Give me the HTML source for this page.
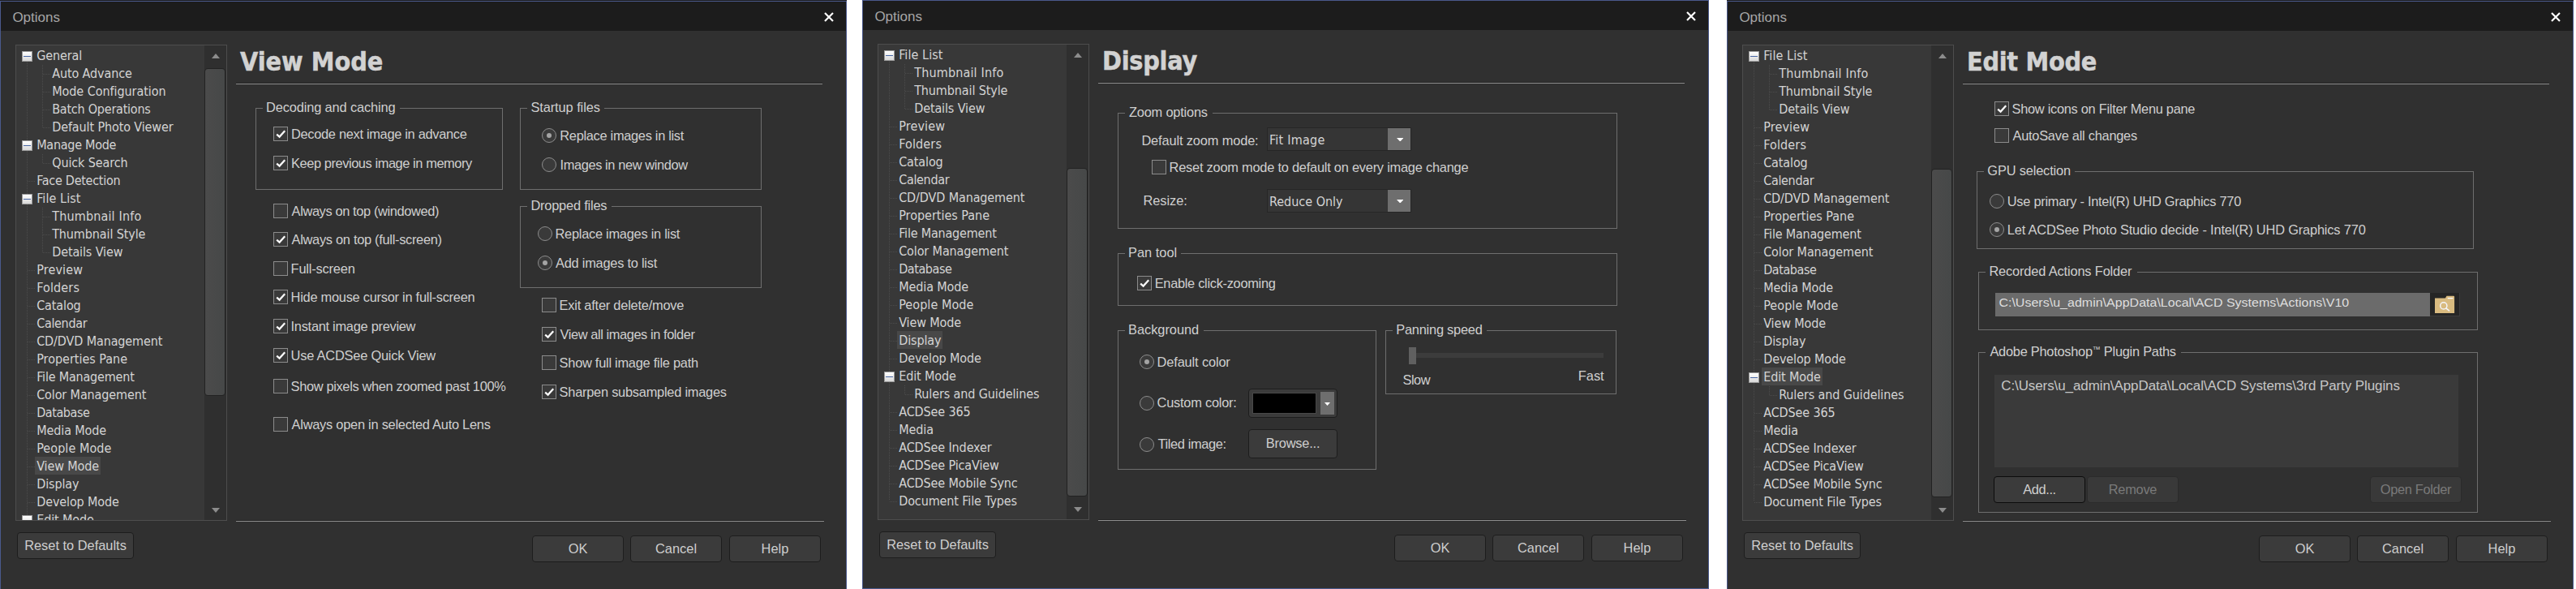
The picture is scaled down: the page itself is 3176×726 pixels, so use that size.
<!DOCTYPE html>
<html lang="en"><head><meta charset="utf-8"><title>Options</title>
<style>
html,body{margin:0;padding:0;}
body{width:3176px;height:726px;background:#fff;overflow:hidden;position:relative;font-family:"Liberation Sans",Arial,sans-serif;}
.dlg{position:absolute;width:1044px;height:727px;background:#303030;overflow:hidden;box-sizing:border-box;}
.dlg .bd{position:absolute;left:0;top:1px;width:1044px;height:726px;box-sizing:border-box;border:1px solid #4a598c;pointer-events:none;}
.r0{position:absolute;left:0;top:0;width:1044px;height:1px;background:#1c1b19;}
.tb{position:absolute;left:1px;top:2px;width:1042px;height:36px;background:#1c1c1c;}
.tt{position:absolute;left:15.4px;top:10.3px;font:17px/24px "Liberation Sans",Arial,sans-serif;color:#a6a6a6;white-space:pre;}
.a{position:absolute;white-space:pre;}
.t{position:absolute;white-space:pre;font:16.4px/20px "Liberation Sans",Arial,sans-serif;color:#cfcfcf;}
.tr{position:absolute;white-space:pre;font:16px/22px "DejaVu Sans Condensed","DejaVu Sans","Liberation Sans",sans-serif;letter-spacing:-0.12px;color:#d4d4d4;height:22px;}
.h{position:absolute;white-space:pre;font:bold 32px/40px "DejaVu Sans Condensed","DejaVu Sans","Liberation Sans",sans-serif;color:#d2d2d2;-webkit-text-stroke:0.5px #d2d2d2;}
.tree{position:absolute;left:19px;top:55px;width:261px;height:587px;box-sizing:border-box;border:1px solid #4d4d4d;background:#383838;overflow:hidden;}
.sb{position:absolute;left:232px;top:0;width:27px;height:585px;background:#2f2f2f;}
.th{position:absolute;left:232px;width:26px;box-sizing:border-box;background:linear-gradient(90deg,#4b4b4b,#464848);border:1px solid #222;border-radius:4px;}
.hr{position:absolute;height:1px;background:#8e8e8e;box-shadow:0 -1px 0 #222;}
.btn{position:absolute;box-sizing:border-box;border:1px solid #1d1d1d;border-radius:4px;background:#3b3b3b;color:#cecece;font:16.4px/20px "Liberation Sans",Arial,sans-serif;text-align:center;white-space:pre;}
.btn.dis{color:#7a7a7a;border-color:#2b2b2b;background:#393939;}
.btn.def{border-color:#0c0c0c;}
.cb{position:absolute;width:18px;height:18px;box-sizing:border-box;border:1px solid #8c8c8c;background:#3a3a3a;}
.rb{position:absolute;width:18px;height:18px;box-sizing:border-box;border:1px solid #8c8c8c;background:#3a3a3a;border-radius:50%;}
.rb.on::after{content:"";position:absolute;left:5px;top:5px;width:6px;height:6px;border-radius:50%;background:#a4a4a4;}
.gb{position:absolute;box-sizing:border-box;border:1px solid #6e6e6e;}
.gl{position:absolute;white-space:pre;font:16.4px/20px "Liberation Sans",Arial,sans-serif;color:#d4d4d4;background:#303030;}
.dd{position:absolute;box-sizing:border-box;border:1px solid #262626;background:#353535;}
.dd .ar{position:absolute;right:0;top:0;bottom:0;width:28px;background:#6e6e6e;}
.xb{position:absolute;width:13px;height:13px;box-sizing:border-box;border:1px solid #9a9a9a;background:linear-gradient(#ffffff,#d8d8d8);}
.xb::after{content:"";position:absolute;left:1px;top:5px;width:9px;height:1px;background:#4a68a6;}
.sm{font-size:10px;position:relative;top:-4.5px;}
</style></head>
<body>
<div class="dlg" style="left:0px;top:0px">
<div class="tb"></div><div class="tt">Options</div>
<svg class="a" style="left:1014.8px;top:13.9px" width="14" height="14" viewBox="0 0 14 14"><path d="M2 2 L12 12 M12 2 L2 12" stroke="#fff" stroke-width="2.2" fill="none"/></svg>
<div class="h" style="left:296px;top:56px;letter-spacing:0px">View Mode</div>
<div class="hr" style="left:291px;top:103px;width:723px"></div>
<div class="hr" style="left:291px;top:642px;width:725px"></div>
<div class="btn " style="left:21px;top:656px;width:144px;height:33px;line-height:30.5px;letter-spacing:0.000px;padding-left:0.000px;">Reset to Defaults</div>
<div class="btn " style="left:656px;top:660px;width:113px;height:33px;line-height:30.5px;letter-spacing:0.000px;padding-left:0.000px;">OK</div>
<div class="btn " style="left:777px;top:660px;width:113px;height:33px;line-height:30.5px;letter-spacing:0.020px;padding-left:0.020px;">Cancel</div>
<div class="btn " style="left:899px;top:660px;width:113px;height:33px;line-height:30.5px;letter-spacing:0.033px;padding-left:0.033px;">Help</div>
<div class="tree">
<div class="a" style="left:13px;top:12px;width:1px;height:594px;background-image:linear-gradient(#4c4c4c 50%,transparent 50%);background-size:1px 2px;"></div>
<div class="xb" style="left:7px;top:7px"></div>
<div class="tr" style="left:23.200000000000003px;top:1px;padding:0 2px;line-height:24px;">General</div>
<div class="a" style="left:33px;top:35px;width:9px;height:1px;background-image:linear-gradient(90deg,#4c4c4c 50%,transparent 50%);background-size:2px 1px;"></div>
<div class="a" style="left:32px;top:24px;width:1px;height:22px;background-image:linear-gradient(#4c4c4c 50%,transparent 50%);background-size:1px 2px;"></div>
<div class="tr" style="left:42.2px;top:23px;padding:0 2px;line-height:24px;">Auto Advance</div>
<div class="a" style="left:33px;top:57px;width:9px;height:1px;background-image:linear-gradient(90deg,#4c4c4c 50%,transparent 50%);background-size:2px 1px;"></div>
<div class="a" style="left:32px;top:46px;width:1px;height:22px;background-image:linear-gradient(#4c4c4c 50%,transparent 50%);background-size:1px 2px;"></div>
<div class="tr" style="left:42.2px;top:45px;padding:0 2px;line-height:24px;letter-spacing:-0.06px;">Mode Configuration</div>
<div class="a" style="left:33px;top:79px;width:9px;height:1px;background-image:linear-gradient(90deg,#4c4c4c 50%,transparent 50%);background-size:2px 1px;"></div>
<div class="a" style="left:32px;top:68px;width:1px;height:22px;background-image:linear-gradient(#4c4c4c 50%,transparent 50%);background-size:1px 2px;"></div>
<div class="tr" style="left:42.2px;top:67px;padding:0 2px;line-height:24px;letter-spacing:-0.23px;">Batch Operations</div>
<div class="a" style="left:33px;top:101px;width:9px;height:1px;background-image:linear-gradient(90deg,#4c4c4c 50%,transparent 50%);background-size:2px 1px;"></div>
<div class="a" style="left:32px;top:90px;width:1px;height:12px;background-image:linear-gradient(#4c4c4c 50%,transparent 50%);background-size:1px 2px;"></div>
<div class="tr" style="left:42.2px;top:89px;padding:0 2px;line-height:24px;">Default Photo Viewer</div>
<div class="xb" style="left:7px;top:117px"></div>
<div class="tr" style="left:23.200000000000003px;top:111px;padding:0 2px;line-height:24px;letter-spacing:-0.27px;">Manage Mode</div>
<div class="a" style="left:33px;top:145px;width:9px;height:1px;background-image:linear-gradient(90deg,#4c4c4c 50%,transparent 50%);background-size:2px 1px;"></div>
<div class="a" style="left:32px;top:134px;width:1px;height:12px;background-image:linear-gradient(#4c4c4c 50%,transparent 50%);background-size:1px 2px;"></div>
<div class="tr" style="left:42.2px;top:133px;padding:0 2px;line-height:24px;">Quick Search</div>
<div class="a" style="left:14px;top:167px;width:9px;height:1px;background-image:linear-gradient(90deg,#4c4c4c 50%,transparent 50%);background-size:2px 1px;"></div>
<div class="tr" style="left:23.200000000000003px;top:155px;padding:0 2px;line-height:24px;letter-spacing:-0.27px;">Face Detection</div>
<div class="xb" style="left:7px;top:183px"></div>
<div class="tr" style="left:23.200000000000003px;top:177px;padding:0 2px;line-height:24px;letter-spacing:0.07px;">File List</div>
<div class="a" style="left:33px;top:211px;width:9px;height:1px;background-image:linear-gradient(90deg,#4c4c4c 50%,transparent 50%);background-size:2px 1px;"></div>
<div class="a" style="left:32px;top:200px;width:1px;height:22px;background-image:linear-gradient(#4c4c4c 50%,transparent 50%);background-size:1px 2px;"></div>
<div class="tr" style="left:42.2px;top:199px;padding:0 2px;line-height:24px;letter-spacing:0.16px;">Thumbnail Info</div>
<div class="a" style="left:33px;top:233px;width:9px;height:1px;background-image:linear-gradient(90deg,#4c4c4c 50%,transparent 50%);background-size:2px 1px;"></div>
<div class="a" style="left:32px;top:222px;width:1px;height:22px;background-image:linear-gradient(#4c4c4c 50%,transparent 50%);background-size:1px 2px;"></div>
<div class="tr" style="left:42.2px;top:221px;padding:0 2px;line-height:24px;">Thumbnail Style</div>
<div class="a" style="left:33px;top:255px;width:9px;height:1px;background-image:linear-gradient(90deg,#4c4c4c 50%,transparent 50%);background-size:2px 1px;"></div>
<div class="a" style="left:32px;top:244px;width:1px;height:12px;background-image:linear-gradient(#4c4c4c 50%,transparent 50%);background-size:1px 2px;"></div>
<div class="tr" style="left:42.2px;top:243px;padding:0 2px;line-height:24px;">Details View</div>
<div class="a" style="left:14px;top:277px;width:9px;height:1px;background-image:linear-gradient(90deg,#4c4c4c 50%,transparent 50%);background-size:2px 1px;"></div>
<div class="tr" style="left:23.200000000000003px;top:265px;padding:0 2px;line-height:24px;letter-spacing:0.15px;">Preview</div>
<div class="a" style="left:14px;top:299px;width:9px;height:1px;background-image:linear-gradient(90deg,#4c4c4c 50%,transparent 50%);background-size:2px 1px;"></div>
<div class="tr" style="left:23.200000000000003px;top:287px;padding:0 2px;line-height:24px;letter-spacing:0.13px;">Folders</div>
<div class="a" style="left:14px;top:321px;width:9px;height:1px;background-image:linear-gradient(90deg,#4c4c4c 50%,transparent 50%);background-size:2px 1px;"></div>
<div class="tr" style="left:23.200000000000003px;top:309px;padding:0 2px;line-height:24px;">Catalog</div>
<div class="a" style="left:14px;top:343px;width:9px;height:1px;background-image:linear-gradient(90deg,#4c4c4c 50%,transparent 50%);background-size:2px 1px;"></div>
<div class="tr" style="left:23.200000000000003px;top:331px;padding:0 2px;line-height:24px;letter-spacing:-0.33px;">Calendar</div>
<div class="a" style="left:14px;top:365px;width:9px;height:1px;background-image:linear-gradient(90deg,#4c4c4c 50%,transparent 50%);background-size:2px 1px;"></div>
<div class="tr" style="left:23.200000000000003px;top:353px;padding:0 2px;line-height:24px;">CD/DVD Management</div>
<div class="a" style="left:14px;top:387px;width:9px;height:1px;background-image:linear-gradient(90deg,#4c4c4c 50%,transparent 50%);background-size:2px 1px;"></div>
<div class="tr" style="left:23.200000000000003px;top:375px;padding:0 2px;line-height:24px;letter-spacing:-0.01px;">Properties Pane</div>
<div class="a" style="left:14px;top:409px;width:9px;height:1px;background-image:linear-gradient(90deg,#4c4c4c 50%,transparent 50%);background-size:2px 1px;"></div>
<div class="tr" style="left:23.200000000000003px;top:397px;padding:0 2px;line-height:24px;letter-spacing:-0.2px;">File Management</div>
<div class="a" style="left:14px;top:431px;width:9px;height:1px;background-image:linear-gradient(90deg,#4c4c4c 50%,transparent 50%);background-size:2px 1px;"></div>
<div class="tr" style="left:23.200000000000003px;top:419px;padding:0 2px;line-height:24px;">Color Management</div>
<div class="a" style="left:14px;top:453px;width:9px;height:1px;background-image:linear-gradient(90deg,#4c4c4c 50%,transparent 50%);background-size:2px 1px;"></div>
<div class="tr" style="left:23.200000000000003px;top:441px;padding:0 2px;line-height:24px;letter-spacing:-0.42px;">Database</div>
<div class="a" style="left:14px;top:475px;width:9px;height:1px;background-image:linear-gradient(90deg,#4c4c4c 50%,transparent 50%);background-size:2px 1px;"></div>
<div class="tr" style="left:23.200000000000003px;top:463px;padding:0 2px;line-height:24px;">Media Mode</div>
<div class="a" style="left:14px;top:497px;width:9px;height:1px;background-image:linear-gradient(90deg,#4c4c4c 50%,transparent 50%);background-size:2px 1px;"></div>
<div class="tr" style="left:23.200000000000003px;top:485px;padding:0 2px;line-height:24px;letter-spacing:0.06px;">People Mode</div>
<div class="a" style="left:14px;top:519px;width:9px;height:1px;background-image:linear-gradient(90deg,#4c4c4c 50%,transparent 50%);background-size:2px 1px;"></div>
<div class="tr" style="left:23.200000000000003px;top:507px;padding:0 2px;line-height:24px;background:#484848;">View Mode</div>
<div class="a" style="left:14px;top:541px;width:9px;height:1px;background-image:linear-gradient(90deg,#4c4c4c 50%,transparent 50%);background-size:2px 1px;"></div>
<div class="tr" style="left:23.200000000000003px;top:529px;padding:0 2px;line-height:24px;">Display</div>
<div class="a" style="left:14px;top:563px;width:9px;height:1px;background-image:linear-gradient(90deg,#4c4c4c 50%,transparent 50%);background-size:2px 1px;"></div>
<div class="tr" style="left:23.200000000000003px;top:551px;padding:0 2px;line-height:24px;">Develop Mode</div>
<div class="xb" style="left:7px;top:579px"></div>
<div class="tr" style="left:23.200000000000003px;top:573px;padding:0 2px;line-height:24px;">Edit Mode</div>
<div class="a" style="left:33px;top:607px;width:9px;height:1px;background-image:linear-gradient(90deg,#4c4c4c 50%,transparent 50%);background-size:2px 1px;"></div>
<div class="a" style="left:32px;top:596px;width:1px;height:12px;background-image:linear-gradient(#4c4c4c 50%,transparent 50%);background-size:1px 2px;"></div>
<div class="tr" style="left:42.2px;top:595px;padding:0 2px;line-height:24px;">Rulers and Guidelines</div>
<div class="sb"></div>
<div class="th" style="top:28px;height:404px"></div>
<svg class="a" style="left:240.5px;top:10px" width="10" height="6" viewBox="0 0 10 6"><path d="M0 6 L5 0 L10 6 Z" fill="#8c8c8c"/></svg>
<svg class="a" style="left:240.5px;top:570.0px" width="10" height="6" viewBox="0 0 10 6"><path d="M0 0 L10 0 L5.0 6 Z" fill="#8c8c8c"/></svg>
</div>
<div class="gb" style="left:315px;top:133px;width:305px;height:101px"></div>
<div class="a" style="left:324.0px;top:131px;width:168.5px;height:5px;background:#303030"></div>
<div class="t" style="left:328.00px;top:121.75px;letter-spacing:-0.132px;">Decoding and caching</div>
<div class="cb" style="left:337px;top:156px"><svg class="a" style="left:0;top:0" width="16" height="16" viewBox="0 0 16 16"><path d="M3.2 8.6 L6.6 11.6 L13.2 4.2" fill="none" stroke="#fff" stroke-width="2.2"/></svg></div>
<div class="t" style="left:359.00px;top:154.75px;letter-spacing:-0.307px;">Decode next image in advance</div>
<div class="cb" style="left:337px;top:192px"><svg class="a" style="left:0;top:0" width="16" height="16" viewBox="0 0 16 16"><path d="M3.2 8.6 L6.6 11.6 L13.2 4.2" fill="none" stroke="#fff" stroke-width="2.2"/></svg></div>
<div class="t" style="left:359.00px;top:190.75px;letter-spacing:-0.421px;">Keep previous image in memory</div>
<div class="cb" style="left:337px;top:251px"></div>
<div class="t" style="left:359.60px;top:249.75px;letter-spacing:-0.374px;">Always on top (windowed)</div>
<div class="cb" style="left:337px;top:286px"><svg class="a" style="left:0;top:0" width="16" height="16" viewBox="0 0 16 16"><path d="M3.2 8.6 L6.6 11.6 L13.2 4.2" fill="none" stroke="#fff" stroke-width="2.2"/></svg></div>
<div class="t" style="left:359.60px;top:284.75px;letter-spacing:-0.296px;">Always on top (full-screen)</div>
<div class="cb" style="left:337px;top:322px"></div>
<div class="t" style="left:358.60px;top:320.75px;letter-spacing:-0.180px;">Full-screen</div>
<div class="cb" style="left:337px;top:357px"><svg class="a" style="left:0;top:0" width="16" height="16" viewBox="0 0 16 16"><path d="M3.2 8.6 L6.6 11.6 L13.2 4.2" fill="none" stroke="#fff" stroke-width="2.2"/></svg></div>
<div class="t" style="left:358.60px;top:355.75px;letter-spacing:-0.258px;">Hide mouse cursor in full-screen</div>
<div class="cb" style="left:337px;top:393px"><svg class="a" style="left:0;top:0" width="16" height="16" viewBox="0 0 16 16"><path d="M3.2 8.6 L6.6 11.6 L13.2 4.2" fill="none" stroke="#fff" stroke-width="2.2"/></svg></div>
<div class="t" style="left:358.60px;top:391.75px;letter-spacing:-0.280px;">Instant image preview</div>
<div class="cb" style="left:337px;top:429px"><svg class="a" style="left:0;top:0" width="16" height="16" viewBox="0 0 16 16"><path d="M3.2 8.6 L6.6 11.6 L13.2 4.2" fill="none" stroke="#fff" stroke-width="2.2"/></svg></div>
<div class="t" style="left:358.60px;top:427.75px;letter-spacing:-0.210px;">Use ACDSee Quick View</div>
<div class="cb" style="left:337px;top:467px"></div>
<div class="t" style="left:358.60px;top:465.75px;letter-spacing:-0.341px;">Show pixels when zoomed past 100%</div>
<div class="cb" style="left:337px;top:514px"></div>
<div class="t" style="left:359.60px;top:512.75px;letter-spacing:-0.250px;">Always open in selected Auto Lens</div>
<div class="gb" style="left:641px;top:133px;width:298px;height:101px"></div>
<div class="a" style="left:650.4px;top:131px;width:95.0px;height:5px;background:#303030"></div>
<div class="t" style="left:654.40px;top:121.75px;letter-spacing:-0.083px;">Startup files</div>
<div class="rb on" style="left:668px;top:158px"></div>
<div class="t" style="left:690.30px;top:156.75px;letter-spacing:-0.305px;">Replace images in list</div>
<div class="rb" style="left:668px;top:194px"></div>
<div class="t" style="left:690.50px;top:192.75px;letter-spacing:-0.384px;">Images in new window</div>
<div class="gb" style="left:641px;top:254px;width:298px;height:101px"></div>
<div class="a" style="left:650.4px;top:252px;width:103.6px;height:5px;background:#303030"></div>
<div class="t" style="left:654.40px;top:242.75px;letter-spacing:-0.200px;">Dropped files</div>
<div class="rb" style="left:663px;top:279px"></div>
<div class="t" style="left:684.50px;top:277.75px;letter-spacing:-0.262px;">Replace images in list</div>
<div class="rb on" style="left:663px;top:315px"></div>
<div class="t" style="left:685.00px;top:313.75px;letter-spacing:-0.241px;">Add images to list</div>
<div class="cb" style="left:668px;top:367px"></div>
<div class="t" style="left:689.60px;top:365.75px;letter-spacing:-0.224px;">Exit after delete/move</div>
<div class="cb" style="left:668px;top:403px"><svg class="a" style="left:0;top:0" width="16" height="16" viewBox="0 0 16 16"><path d="M3.2 8.6 L6.6 11.6 L13.2 4.2" fill="none" stroke="#fff" stroke-width="2.2"/></svg></div>
<div class="t" style="left:690.60px;top:401.75px;letter-spacing:-0.421px;">View all images in folder</div>
<div class="cb" style="left:668px;top:438px"></div>
<div class="t" style="left:689.60px;top:436.75px;letter-spacing:-0.258px;">Show full image file path</div>
<div class="cb" style="left:668px;top:474px"><svg class="a" style="left:0;top:0" width="16" height="16" viewBox="0 0 16 16"><path d="M3.2 8.6 L6.6 11.6 L13.2 4.2" fill="none" stroke="#fff" stroke-width="2.2"/></svg></div>
<div class="t" style="left:689.60px;top:472.75px;letter-spacing:-0.246px;">Sharpen subsampled images</div>
<div class="bd"></div><div class="r0"></div>
</div>
<div class="dlg" style="left:1063px;top:-1px">
<div class="tb"></div><div class="tt">Options</div>
<svg class="a" style="left:1014.8px;top:13.9px" width="14" height="14" viewBox="0 0 14 14"><path d="M2 2 L12 12 M12 2 L2 12" stroke="#fff" stroke-width="2.2" fill="none"/></svg>
<div class="h" style="left:296px;top:56px;letter-spacing:-0.23px">Display</div>
<div class="hr" style="left:291px;top:103px;width:723px"></div>
<div class="hr" style="left:291px;top:642px;width:725px"></div>
<div class="btn " style="left:21px;top:656px;width:144px;height:33px;line-height:30.5px;letter-spacing:0.000px;padding-left:0.000px;">Reset to Defaults</div>
<div class="btn " style="left:656px;top:660px;width:113px;height:33px;line-height:30.5px;letter-spacing:0.000px;padding-left:0.000px;">OK</div>
<div class="btn " style="left:777px;top:660px;width:113px;height:33px;line-height:30.5px;letter-spacing:0.020px;padding-left:0.020px;">Cancel</div>
<div class="btn " style="left:899px;top:660px;width:113px;height:33px;line-height:30.5px;letter-spacing:0.033px;padding-left:0.033px;">Help</div>
<div class="tree">
<div class="a" style="left:13px;top:12px;width:1px;height:550px;background-image:linear-gradient(#4c4c4c 50%,transparent 50%);background-size:1px 2px;"></div>
<div class="xb" style="left:7px;top:7px"></div>
<div class="tr" style="left:23.200000000000003px;top:1px;padding:0 2px;line-height:24px;letter-spacing:0.07px;">File List</div>
<div class="a" style="left:33px;top:35px;width:9px;height:1px;background-image:linear-gradient(90deg,#4c4c4c 50%,transparent 50%);background-size:2px 1px;"></div>
<div class="a" style="left:32px;top:24px;width:1px;height:22px;background-image:linear-gradient(#4c4c4c 50%,transparent 50%);background-size:1px 2px;"></div>
<div class="tr" style="left:42.2px;top:23px;padding:0 2px;line-height:24px;letter-spacing:0.16px;">Thumbnail Info</div>
<div class="a" style="left:33px;top:57px;width:9px;height:1px;background-image:linear-gradient(90deg,#4c4c4c 50%,transparent 50%);background-size:2px 1px;"></div>
<div class="a" style="left:32px;top:46px;width:1px;height:22px;background-image:linear-gradient(#4c4c4c 50%,transparent 50%);background-size:1px 2px;"></div>
<div class="tr" style="left:42.2px;top:45px;padding:0 2px;line-height:24px;">Thumbnail Style</div>
<div class="a" style="left:33px;top:79px;width:9px;height:1px;background-image:linear-gradient(90deg,#4c4c4c 50%,transparent 50%);background-size:2px 1px;"></div>
<div class="a" style="left:32px;top:68px;width:1px;height:12px;background-image:linear-gradient(#4c4c4c 50%,transparent 50%);background-size:1px 2px;"></div>
<div class="tr" style="left:42.2px;top:67px;padding:0 2px;line-height:24px;">Details View</div>
<div class="a" style="left:14px;top:101px;width:9px;height:1px;background-image:linear-gradient(90deg,#4c4c4c 50%,transparent 50%);background-size:2px 1px;"></div>
<div class="tr" style="left:23.200000000000003px;top:89px;padding:0 2px;line-height:24px;letter-spacing:0.15px;">Preview</div>
<div class="a" style="left:14px;top:123px;width:9px;height:1px;background-image:linear-gradient(90deg,#4c4c4c 50%,transparent 50%);background-size:2px 1px;"></div>
<div class="tr" style="left:23.200000000000003px;top:111px;padding:0 2px;line-height:24px;letter-spacing:0.13px;">Folders</div>
<div class="a" style="left:14px;top:145px;width:9px;height:1px;background-image:linear-gradient(90deg,#4c4c4c 50%,transparent 50%);background-size:2px 1px;"></div>
<div class="tr" style="left:23.200000000000003px;top:133px;padding:0 2px;line-height:24px;">Catalog</div>
<div class="a" style="left:14px;top:167px;width:9px;height:1px;background-image:linear-gradient(90deg,#4c4c4c 50%,transparent 50%);background-size:2px 1px;"></div>
<div class="tr" style="left:23.200000000000003px;top:155px;padding:0 2px;line-height:24px;letter-spacing:-0.33px;">Calendar</div>
<div class="a" style="left:14px;top:189px;width:9px;height:1px;background-image:linear-gradient(90deg,#4c4c4c 50%,transparent 50%);background-size:2px 1px;"></div>
<div class="tr" style="left:23.200000000000003px;top:177px;padding:0 2px;line-height:24px;">CD/DVD Management</div>
<div class="a" style="left:14px;top:211px;width:9px;height:1px;background-image:linear-gradient(90deg,#4c4c4c 50%,transparent 50%);background-size:2px 1px;"></div>
<div class="tr" style="left:23.200000000000003px;top:199px;padding:0 2px;line-height:24px;letter-spacing:-0.01px;">Properties Pane</div>
<div class="a" style="left:14px;top:233px;width:9px;height:1px;background-image:linear-gradient(90deg,#4c4c4c 50%,transparent 50%);background-size:2px 1px;"></div>
<div class="tr" style="left:23.200000000000003px;top:221px;padding:0 2px;line-height:24px;letter-spacing:-0.2px;">File Management</div>
<div class="a" style="left:14px;top:255px;width:9px;height:1px;background-image:linear-gradient(90deg,#4c4c4c 50%,transparent 50%);background-size:2px 1px;"></div>
<div class="tr" style="left:23.200000000000003px;top:243px;padding:0 2px;line-height:24px;">Color Management</div>
<div class="a" style="left:14px;top:277px;width:9px;height:1px;background-image:linear-gradient(90deg,#4c4c4c 50%,transparent 50%);background-size:2px 1px;"></div>
<div class="tr" style="left:23.200000000000003px;top:265px;padding:0 2px;line-height:24px;letter-spacing:-0.42px;">Database</div>
<div class="a" style="left:14px;top:299px;width:9px;height:1px;background-image:linear-gradient(90deg,#4c4c4c 50%,transparent 50%);background-size:2px 1px;"></div>
<div class="tr" style="left:23.200000000000003px;top:287px;padding:0 2px;line-height:24px;">Media Mode</div>
<div class="a" style="left:14px;top:321px;width:9px;height:1px;background-image:linear-gradient(90deg,#4c4c4c 50%,transparent 50%);background-size:2px 1px;"></div>
<div class="tr" style="left:23.200000000000003px;top:309px;padding:0 2px;line-height:24px;letter-spacing:0.06px;">People Mode</div>
<div class="a" style="left:14px;top:343px;width:9px;height:1px;background-image:linear-gradient(90deg,#4c4c4c 50%,transparent 50%);background-size:2px 1px;"></div>
<div class="tr" style="left:23.200000000000003px;top:331px;padding:0 2px;line-height:24px;">View Mode</div>
<div class="a" style="left:14px;top:365px;width:9px;height:1px;background-image:linear-gradient(90deg,#4c4c4c 50%,transparent 50%);background-size:2px 1px;"></div>
<div class="tr" style="left:23.200000000000003px;top:353px;padding:0 2px;line-height:24px;background:#484848;">Display</div>
<div class="a" style="left:14px;top:387px;width:9px;height:1px;background-image:linear-gradient(90deg,#4c4c4c 50%,transparent 50%);background-size:2px 1px;"></div>
<div class="tr" style="left:23.200000000000003px;top:375px;padding:0 2px;line-height:24px;">Develop Mode</div>
<div class="xb" style="left:7px;top:403px"></div>
<div class="tr" style="left:23.200000000000003px;top:397px;padding:0 2px;line-height:24px;">Edit Mode</div>
<div class="a" style="left:33px;top:431px;width:9px;height:1px;background-image:linear-gradient(90deg,#4c4c4c 50%,transparent 50%);background-size:2px 1px;"></div>
<div class="a" style="left:32px;top:420px;width:1px;height:12px;background-image:linear-gradient(#4c4c4c 50%,transparent 50%);background-size:1px 2px;"></div>
<div class="tr" style="left:42.2px;top:419px;padding:0 2px;line-height:24px;">Rulers and Guidelines</div>
<div class="a" style="left:14px;top:453px;width:9px;height:1px;background-image:linear-gradient(90deg,#4c4c4c 50%,transparent 50%);background-size:2px 1px;"></div>
<div class="tr" style="left:23.200000000000003px;top:441px;padding:0 2px;line-height:24px;">ACDSee 365</div>
<div class="a" style="left:14px;top:475px;width:9px;height:1px;background-image:linear-gradient(90deg,#4c4c4c 50%,transparent 50%);background-size:2px 1px;"></div>
<div class="tr" style="left:23.200000000000003px;top:463px;padding:0 2px;line-height:24px;">Media</div>
<div class="a" style="left:14px;top:497px;width:9px;height:1px;background-image:linear-gradient(90deg,#4c4c4c 50%,transparent 50%);background-size:2px 1px;"></div>
<div class="tr" style="left:23.200000000000003px;top:485px;padding:0 2px;line-height:24px;">ACDSee Indexer</div>
<div class="a" style="left:14px;top:519px;width:9px;height:1px;background-image:linear-gradient(90deg,#4c4c4c 50%,transparent 50%);background-size:2px 1px;"></div>
<div class="tr" style="left:23.200000000000003px;top:507px;padding:0 2px;line-height:24px;">ACDSee PicaView</div>
<div class="a" style="left:14px;top:541px;width:9px;height:1px;background-image:linear-gradient(90deg,#4c4c4c 50%,transparent 50%);background-size:2px 1px;"></div>
<div class="tr" style="left:23.200000000000003px;top:529px;padding:0 2px;line-height:24px;">ACDSee Mobile Sync</div>
<div class="a" style="left:14px;top:563px;width:9px;height:1px;background-image:linear-gradient(90deg,#4c4c4c 50%,transparent 50%);background-size:2px 1px;"></div>
<div class="tr" style="left:23.200000000000003px;top:551px;padding:0 2px;line-height:24px;">Document File Types</div>
<div class="sb"></div>
<div class="th" style="top:152px;height:405px"></div>
<svg class="a" style="left:240.5px;top:10px" width="10" height="6" viewBox="0 0 10 6"><path d="M0 6 L5 0 L10 6 Z" fill="#8c8c8c"/></svg>
<svg class="a" style="left:240.5px;top:570.0px" width="10" height="6" viewBox="0 0 10 6"><path d="M0 0 L10 0 L5.0 6 Z" fill="#8c8c8c"/></svg>
</div>
<div class="gb" style="left:315px;top:140px;width:616px;height:143px"></div>
<div class="a" style="left:324.0px;top:138px;width:107.7px;height:5px;background:#303030"></div>
<div class="t" style="left:329.00px;top:128.75px;letter-spacing:-0.209px;">Zoom options</div>
<div class="t" style="left:344.40px;top:163.75px;letter-spacing:-0.141px;">Default zoom mode:</div>
<div class="dd" style="left:499px;top:158px;width:178px;height:29px"><div class="ar"></div></div>
<svg class="a" style="left:658.75px;top:170.75px" width="8.5" height="4.5" viewBox="0 0 8.5 4.5"><path d="M0 0 L8.5 0 L4.25 4.5 Z" fill="#fff"/></svg>
<div class="tr" style="left:502.00px;top:163.16px;letter-spacing:0.238px;">Fit Image</div>
<div class="cb" style="left:357px;top:198px"></div>
<div class="t" style="left:378.60px;top:196.75px;letter-spacing:-0.234px;">Reset zoom mode to default on every image change</div>
<div class="t" style="left:346.50px;top:238.25px;letter-spacing:-0.050px;">Resize:</div>
<div class="dd" style="left:499px;top:234px;width:178px;height:29px"><div class="ar"></div></div>
<svg class="a" style="left:658.75px;top:246.75px" width="8.5" height="4.5" viewBox="0 0 8.5 4.5"><path d="M0 0 L8.5 0 L4.25 4.5 Z" fill="#fff"/></svg>
<div class="tr" style="left:502.00px;top:239.16px;letter-spacing:-0.010px;">Reduce Only</div>
<div class="gb" style="left:315px;top:313px;width:616px;height:65px"></div>
<div class="a" style="left:324.0px;top:311px;width:69.0px;height:5px;background:#303030"></div>
<div class="t" style="left:328.00px;top:301.75px;letter-spacing:0.000px;">Pan tool</div>
<div class="cb" style="left:339px;top:341px"><svg class="a" style="left:0;top:0" width="16" height="16" viewBox="0 0 16 16"><path d="M3.2 8.6 L6.6 11.6 L13.2 4.2" fill="none" stroke="#fff" stroke-width="2.2"/></svg></div>
<div class="t" style="left:360.70px;top:339.75px;letter-spacing:-0.300px;">Enable click-zooming</div>
<div class="gb" style="left:315px;top:408px;width:319px;height:172px"></div>
<div class="a" style="left:324.0px;top:406px;width:96.7px;height:5px;background:#303030"></div>
<div class="t" style="left:328.00px;top:396.75px;letter-spacing:-0.033px;">Background</div>
<div class="rb on" style="left:342px;top:438px"></div>
<div class="t" style="left:363.60px;top:436.75px;letter-spacing:-0.150px;">Default color</div>
<div class="rb" style="left:342px;top:488.5px"></div>
<div class="t" style="left:363.60px;top:487.25px;letter-spacing:-0.242px;">Custom color:</div>
<div class="rb" style="left:342px;top:539.5px"></div>
<div class="t" style="left:364.60px;top:538.25px;letter-spacing:-0.391px;">Tiled image:</div>
<div class="btn" style="left:476px;top:480px;width:110px;height:36px"></div>
<div class="a" style="left:481px;top:485px;width:79px;height:26px;background:#000;border:1px solid #484848;box-sizing:border-box"></div>
<div class="a" style="left:565px;top:484px;width:17px;height:28px;background:#6e6e6e"></div>
<svg class="a" style="left:570.0px;top:496.5px" width="7" height="4" viewBox="0 0 7 4"><path d="M0 0 L7 0 L3.5 4 Z" fill="#fff"/></svg>
<div class="btn " style="left:476px;top:530px;width:110px;height:36px;line-height:33.5px;letter-spacing:-0.200px;padding-left:-0.200px;">Browse...</div>
<div class="gb" style="left:645px;top:408px;width:285px;height:79px"></div>
<div class="a" style="left:654.3px;top:406px;width:116.1px;height:5px;background:#303030"></div>
<div class="t" style="left:658.30px;top:396.75px;letter-spacing:-0.242px;">Panning speed</div>
<div class="a" style="left:674px;top:436px;width:240px;height:6px;background:#3c3c3c"></div>
<div class="a" style="left:674px;top:428.5px;width:9px;height:21px;background:#606060"></div>
<div class="t" style="left:666.50px;top:458.75px;letter-spacing:-0.500px;">Slow</div>
<div class="t" style="left:882.70px;top:453.75px;letter-spacing:0.033px;">Fast</div>
<div class="bd"></div><div class="r0"></div>
</div>
<div class="dlg" style="left:2129px;top:0px">
<div class="tb"></div><div class="tt">Options</div>
<svg class="a" style="left:1014.8px;top:13.9px" width="14" height="14" viewBox="0 0 14 14"><path d="M2 2 L12 12 M12 2 L2 12" stroke="#fff" stroke-width="2.2" fill="none"/></svg>
<div class="h" style="left:296px;top:56px;letter-spacing:-0.27px">Edit Mode</div>
<div class="hr" style="left:291px;top:103px;width:723px"></div>
<div class="hr" style="left:291px;top:642px;width:725px"></div>
<div class="btn " style="left:21px;top:656px;width:144px;height:33px;line-height:30.5px;letter-spacing:0.000px;padding-left:0.000px;">Reset to Defaults</div>
<div class="btn " style="left:656px;top:660px;width:113px;height:33px;line-height:30.5px;letter-spacing:0.000px;padding-left:0.000px;">OK</div>
<div class="btn " style="left:777px;top:660px;width:113px;height:33px;line-height:30.5px;letter-spacing:0.020px;padding-left:0.020px;">Cancel</div>
<div class="btn " style="left:899px;top:660px;width:113px;height:33px;line-height:30.5px;letter-spacing:0.033px;padding-left:0.033px;">Help</div>
<div class="tree">
<div class="a" style="left:13px;top:12px;width:1px;height:550px;background-image:linear-gradient(#4c4c4c 50%,transparent 50%);background-size:1px 2px;"></div>
<div class="xb" style="left:7px;top:7px"></div>
<div class="tr" style="left:23.200000000000003px;top:1px;padding:0 2px;line-height:24px;letter-spacing:0.07px;">File List</div>
<div class="a" style="left:33px;top:35px;width:9px;height:1px;background-image:linear-gradient(90deg,#4c4c4c 50%,transparent 50%);background-size:2px 1px;"></div>
<div class="a" style="left:32px;top:24px;width:1px;height:22px;background-image:linear-gradient(#4c4c4c 50%,transparent 50%);background-size:1px 2px;"></div>
<div class="tr" style="left:42.2px;top:23px;padding:0 2px;line-height:24px;letter-spacing:0.16px;">Thumbnail Info</div>
<div class="a" style="left:33px;top:57px;width:9px;height:1px;background-image:linear-gradient(90deg,#4c4c4c 50%,transparent 50%);background-size:2px 1px;"></div>
<div class="a" style="left:32px;top:46px;width:1px;height:22px;background-image:linear-gradient(#4c4c4c 50%,transparent 50%);background-size:1px 2px;"></div>
<div class="tr" style="left:42.2px;top:45px;padding:0 2px;line-height:24px;">Thumbnail Style</div>
<div class="a" style="left:33px;top:79px;width:9px;height:1px;background-image:linear-gradient(90deg,#4c4c4c 50%,transparent 50%);background-size:2px 1px;"></div>
<div class="a" style="left:32px;top:68px;width:1px;height:12px;background-image:linear-gradient(#4c4c4c 50%,transparent 50%);background-size:1px 2px;"></div>
<div class="tr" style="left:42.2px;top:67px;padding:0 2px;line-height:24px;">Details View</div>
<div class="a" style="left:14px;top:101px;width:9px;height:1px;background-image:linear-gradient(90deg,#4c4c4c 50%,transparent 50%);background-size:2px 1px;"></div>
<div class="tr" style="left:23.200000000000003px;top:89px;padding:0 2px;line-height:24px;letter-spacing:0.15px;">Preview</div>
<div class="a" style="left:14px;top:123px;width:9px;height:1px;background-image:linear-gradient(90deg,#4c4c4c 50%,transparent 50%);background-size:2px 1px;"></div>
<div class="tr" style="left:23.200000000000003px;top:111px;padding:0 2px;line-height:24px;letter-spacing:0.13px;">Folders</div>
<div class="a" style="left:14px;top:145px;width:9px;height:1px;background-image:linear-gradient(90deg,#4c4c4c 50%,transparent 50%);background-size:2px 1px;"></div>
<div class="tr" style="left:23.200000000000003px;top:133px;padding:0 2px;line-height:24px;">Catalog</div>
<div class="a" style="left:14px;top:167px;width:9px;height:1px;background-image:linear-gradient(90deg,#4c4c4c 50%,transparent 50%);background-size:2px 1px;"></div>
<div class="tr" style="left:23.200000000000003px;top:155px;padding:0 2px;line-height:24px;letter-spacing:-0.33px;">Calendar</div>
<div class="a" style="left:14px;top:189px;width:9px;height:1px;background-image:linear-gradient(90deg,#4c4c4c 50%,transparent 50%);background-size:2px 1px;"></div>
<div class="tr" style="left:23.200000000000003px;top:177px;padding:0 2px;line-height:24px;">CD/DVD Management</div>
<div class="a" style="left:14px;top:211px;width:9px;height:1px;background-image:linear-gradient(90deg,#4c4c4c 50%,transparent 50%);background-size:2px 1px;"></div>
<div class="tr" style="left:23.200000000000003px;top:199px;padding:0 2px;line-height:24px;letter-spacing:-0.01px;">Properties Pane</div>
<div class="a" style="left:14px;top:233px;width:9px;height:1px;background-image:linear-gradient(90deg,#4c4c4c 50%,transparent 50%);background-size:2px 1px;"></div>
<div class="tr" style="left:23.200000000000003px;top:221px;padding:0 2px;line-height:24px;letter-spacing:-0.2px;">File Management</div>
<div class="a" style="left:14px;top:255px;width:9px;height:1px;background-image:linear-gradient(90deg,#4c4c4c 50%,transparent 50%);background-size:2px 1px;"></div>
<div class="tr" style="left:23.200000000000003px;top:243px;padding:0 2px;line-height:24px;">Color Management</div>
<div class="a" style="left:14px;top:277px;width:9px;height:1px;background-image:linear-gradient(90deg,#4c4c4c 50%,transparent 50%);background-size:2px 1px;"></div>
<div class="tr" style="left:23.200000000000003px;top:265px;padding:0 2px;line-height:24px;letter-spacing:-0.42px;">Database</div>
<div class="a" style="left:14px;top:299px;width:9px;height:1px;background-image:linear-gradient(90deg,#4c4c4c 50%,transparent 50%);background-size:2px 1px;"></div>
<div class="tr" style="left:23.200000000000003px;top:287px;padding:0 2px;line-height:24px;">Media Mode</div>
<div class="a" style="left:14px;top:321px;width:9px;height:1px;background-image:linear-gradient(90deg,#4c4c4c 50%,transparent 50%);background-size:2px 1px;"></div>
<div class="tr" style="left:23.200000000000003px;top:309px;padding:0 2px;line-height:24px;letter-spacing:0.06px;">People Mode</div>
<div class="a" style="left:14px;top:343px;width:9px;height:1px;background-image:linear-gradient(90deg,#4c4c4c 50%,transparent 50%);background-size:2px 1px;"></div>
<div class="tr" style="left:23.200000000000003px;top:331px;padding:0 2px;line-height:24px;">View Mode</div>
<div class="a" style="left:14px;top:365px;width:9px;height:1px;background-image:linear-gradient(90deg,#4c4c4c 50%,transparent 50%);background-size:2px 1px;"></div>
<div class="tr" style="left:23.200000000000003px;top:353px;padding:0 2px;line-height:24px;">Display</div>
<div class="a" style="left:14px;top:387px;width:9px;height:1px;background-image:linear-gradient(90deg,#4c4c4c 50%,transparent 50%);background-size:2px 1px;"></div>
<div class="tr" style="left:23.200000000000003px;top:375px;padding:0 2px;line-height:24px;">Develop Mode</div>
<div class="xb" style="left:7px;top:403px"></div>
<div class="tr" style="left:23.200000000000003px;top:397px;padding:0 2px;line-height:24px;background:#484848;">Edit Mode</div>
<div class="a" style="left:33px;top:431px;width:9px;height:1px;background-image:linear-gradient(90deg,#4c4c4c 50%,transparent 50%);background-size:2px 1px;"></div>
<div class="a" style="left:32px;top:420px;width:1px;height:12px;background-image:linear-gradient(#4c4c4c 50%,transparent 50%);background-size:1px 2px;"></div>
<div class="tr" style="left:42.2px;top:419px;padding:0 2px;line-height:24px;">Rulers and Guidelines</div>
<div class="a" style="left:14px;top:453px;width:9px;height:1px;background-image:linear-gradient(90deg,#4c4c4c 50%,transparent 50%);background-size:2px 1px;"></div>
<div class="tr" style="left:23.200000000000003px;top:441px;padding:0 2px;line-height:24px;">ACDSee 365</div>
<div class="a" style="left:14px;top:475px;width:9px;height:1px;background-image:linear-gradient(90deg,#4c4c4c 50%,transparent 50%);background-size:2px 1px;"></div>
<div class="tr" style="left:23.200000000000003px;top:463px;padding:0 2px;line-height:24px;">Media</div>
<div class="a" style="left:14px;top:497px;width:9px;height:1px;background-image:linear-gradient(90deg,#4c4c4c 50%,transparent 50%);background-size:2px 1px;"></div>
<div class="tr" style="left:23.200000000000003px;top:485px;padding:0 2px;line-height:24px;">ACDSee Indexer</div>
<div class="a" style="left:14px;top:519px;width:9px;height:1px;background-image:linear-gradient(90deg,#4c4c4c 50%,transparent 50%);background-size:2px 1px;"></div>
<div class="tr" style="left:23.200000000000003px;top:507px;padding:0 2px;line-height:24px;">ACDSee PicaView</div>
<div class="a" style="left:14px;top:541px;width:9px;height:1px;background-image:linear-gradient(90deg,#4c4c4c 50%,transparent 50%);background-size:2px 1px;"></div>
<div class="tr" style="left:23.200000000000003px;top:529px;padding:0 2px;line-height:24px;">ACDSee Mobile Sync</div>
<div class="a" style="left:14px;top:563px;width:9px;height:1px;background-image:linear-gradient(90deg,#4c4c4c 50%,transparent 50%);background-size:2px 1px;"></div>
<div class="tr" style="left:23.200000000000003px;top:551px;padding:0 2px;line-height:24px;">Document File Types</div>
<div class="sb"></div>
<div class="th" style="top:152px;height:405px"></div>
<svg class="a" style="left:240.5px;top:10px" width="10" height="6" viewBox="0 0 10 6"><path d="M0 6 L5 0 L10 6 Z" fill="#8c8c8c"/></svg>
<svg class="a" style="left:240.5px;top:570.0px" width="10" height="6" viewBox="0 0 10 6"><path d="M0 0 L10 0 L5.0 6 Z" fill="#8c8c8c"/></svg>
</div>
<div class="cb" style="left:330px;top:125px"><svg class="a" style="left:0;top:0" width="16" height="16" viewBox="0 0 16 16"><path d="M3.2 8.6 L6.6 11.6 L13.2 4.2" fill="none" stroke="#fff" stroke-width="2.2"/></svg></div>
<div class="t" style="left:351.50px;top:123.75px;letter-spacing:-0.283px;">Show icons on Filter Menu pane</div>
<div class="cb" style="left:330px;top:158px"></div>
<div class="t" style="left:352.50px;top:156.75px;letter-spacing:-0.258px;">AutoSave all changes</div>
<div class="gb" style="left:308px;top:211px;width:613px;height:96px"></div>
<div class="a" style="left:317.3px;top:209px;width:112.0px;height:5px;background:#303030"></div>
<div class="t" style="left:321.30px;top:199.75px;letter-spacing:-0.167px;">GPU selection</div>
<div class="rb" style="left:324px;top:239px"></div>
<div class="t" style="left:345.80px;top:237.75px;letter-spacing:-0.271px;">Use primary - Intel(R) UHD Graphics 770</div>
<div class="rb on" style="left:324px;top:274px"></div>
<div class="t" style="left:345.80px;top:272.75px;letter-spacing:-0.174px;">Let ACDSee Photo Studio decide - Intel(R) UHD Graphics 770</div>
<div class="gb" style="left:310px;top:335px;width:616px;height:72px"></div>
<div class="a" style="left:319.4px;top:333px;width:186.6px;height:5px;background:#303030"></div>
<div class="t" style="left:323.40px;top:323.75px;letter-spacing:-0.155px;">Recorded Actions Folder</div>
<div class="a" style="left:331px;top:361px;width:536px;height:29px;background:#6b6b6b"></div>
<div class="a" style="left:335.40px;top:363.71px;letter-spacing:0.011px;font:16px/20px 'Liberation Sans',Arial,sans-serif;color:#dedede;transform:scaleY(0.9);transform-origin:0 0;">C:\Users\u_admin\AppData\Local\ACD Systems\Actions\V10</div>
<div class="a" style="left:867px;top:361px;width:37px;height:29px;background:#252525;border:0 solid #3c3c3c;border-width:0 1px 1px 0;box-sizing:border-box"></div>
<svg class="a" style="left:872px;top:364px" width="26" height="23" viewBox="0 0 26 23"><path d="M1 3.6 L13.9 3.6 L15.5 0.8 L24.1 0.8 Q25.1 0.8 25.1 1.8 L25.1 22.1 L1 22.1 Z" fill="#d9bb80"/><rect x="16.6" y="2.9" width="6.9" height="1.3" rx="0.6" fill="#fff"/><circle cx="11.8" cy="12.9" r="4.1" fill="none" stroke="#f4f4f8" stroke-width="1.5"/><path d="M14.8 15.9 L18.5 18.8" stroke="#f4f4f8" stroke-width="1.7" stroke-linecap="round"/></svg>
<div class="gb" style="left:310px;top:434px;width:616px;height:198px"></div>
<div class="a" style="left:319.4px;top:432px;width:240.3px;height:5px;background:#303030"></div>
<div class="t" style="left:324.40px;top:422.75px;letter-spacing:-0.261px;">Adobe Photoshop<span class="sm">™</span> Plugin Paths</div>
<div class="a" style="left:330px;top:462px;width:572px;height:114px;background:#3a3a3a"></div>
<div class="a" style="left:338.20px;top:467.48px;letter-spacing:-0.088px;font:17px/20px 'Liberation Sans',Arial,sans-serif;color:#c6c6c6;transform:scaleY(0.92);transform-origin:0 0;">C:\Users\u_admin\AppData\Local\ACD Systems\3rd Party Plugins</div>
<div class="btn def" style="left:329px;top:587px;width:113px;height:33px;line-height:30.5px;letter-spacing:-0.380px;padding-left:-0.380px;">Add...</div>
<div class="btn dis" style="left:444px;top:587px;width:113px;height:33px;line-height:30.5px;letter-spacing:-0.280px;padding-left:-0.280px;">Remove</div>
<div class="btn dis" style="left:793px;top:587px;width:113px;height:33px;line-height:30.5px;letter-spacing:-0.340px;padding-left:-0.340px;">Open Folder</div>
<div class="bd"></div><div class="r0"></div>
</div>
</body></html>
